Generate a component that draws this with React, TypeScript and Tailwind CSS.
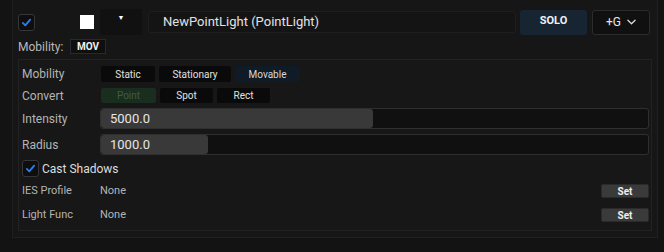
import React from 'react';

const Check = ({ className }: { className?: string }) => (
  <svg viewBox="0 0 16 16" className={className} fill="none">
    <path d="M3.5 8.5 L6.5 11.5 L12.5 4.5" stroke="#2a80e8" strokeWidth="2.2" strokeLinecap="round" strokeLinejoin="round" />
  </svg>
);

const CheckBox = () => (
  <div className="w-[17px] h-[17px] rounded-[3px] bg-[#0e0e0e] border border-[#363636] flex items-center justify-center">
    <Check className="w-[13px] h-[13px]" />
  </div>
);

const SegButton = ({
  label,
  width,
  tone = 'dark',
}: {
  label: string;
  width: string;
  tone?: 'dark' | 'blue' | 'green';
}) => {
  const toneClass =
    tone === 'blue'
      ? 'bg-[#0f1b26] text-[#d8d8d8]'
      : tone === 'green'
        ? 'bg-[#1a2e1f] text-[#3e5d45]'
        : 'bg-[#0a0a0a] text-[#e0e0e0]';
  return (
    <div className={`${width} h-full rounded-[2px] flex items-center justify-center text-[10px] ${toneClass}`}>
      {label}
    </div>
  );
};

const Slider = ({ value, fill }: { value: string; fill: string }) => (
  <div className="flex-1 h-[21px] rounded-[3px] border border-[#2f2f2f] bg-[#101010] relative overflow-hidden">
    <div className={`${fill} h-full rounded-[3px] bg-[#393939]`} />
    <span className="absolute left-[9px] top-0 h-full flex items-center text-[13px] text-[#e6e6e6]">{value}</span>
  </div>
);

const SetButton = () => (
  <div className="w-[48px] h-[14px] rounded-[2px] bg-[#3a3a3a] border border-[#2a2a2a] flex items-center justify-center text-[10px] font-bold text-[#eeeeee]">
    Set
  </div>
);

export default function App() {
  return (
    <div className="w-[664px] h-[252px] bg-[#131313] pl-[12px] font-['Roboto',sans-serif] overflow-hidden">
      <div className="w-[646px] h-[238px] bg-[#161616] border-x border-b border-[#1f1f1f] px-[5px] pt-[9px]">
        {/* header row */}
        <div className="flex items-center h-[26px]">
          <CheckBox />
          <div className="ml-[45px] w-[14px] h-[14px] bg-white" />
          <div className="ml-[6px] w-[42px] h-[26px] rounded-[3px] bg-[#111111] flex justify-center pt-[6px]">
            <span className="text-[7px] leading-none text-white">▼</span>
          </div>
          <div className="ml-[6px] w-[368px] h-[22px] rounded-[3px] bg-[#141414] border border-[#1e1e1e] flex items-center pl-[14px] text-[13px] text-[#e2e2e2]">
            NewPointLight (PointLight)
          </div>
          <div className="ml-[4px] w-[67px] h-[25px] rounded-[3px] bg-[#172533] flex justify-center pt-[3px] text-[11px] font-bold text-[#eef2f6]">
            SOLO
          </div>
          <div className="ml-[5px] w-[58px] h-[25px] rounded-[3px] bg-[#101010] border border-[#2c2c2c] flex items-center justify-center gap-[6px] text-[12px] text-[#e6e6e6]">
            <span>+G</span>
            <svg viewBox="0 0 10 6" className="w-[9px] h-[6px]" fill="none">
              <path d="M1 1 L5 5 L9 1" stroke="#dddddd" strokeWidth="1.4" strokeLinecap="round" strokeLinejoin="round" />
            </svg>
          </div>
        </div>

        {/* mobility badge */}
        <div className="flex items-center h-[15px] mt-[4px]">
          <span className="w-[52px] text-[12px] text-[#b8b8b8]">Mobility:</span>
          <div className="w-[36px] h-[15px] bg-[#0f0f0f] border border-[#232a30] flex items-center justify-center text-[10px] font-bold text-[#f0f0f0]">
            MOV
          </div>
        </div>

        {/* properties panel */}
        <div className="mt-[5px] h-[172px] bg-[#171717] border border-[#222222] pl-[3px] pr-[2px] pt-[6px]">
          <div className="flex items-center h-[16px]">
            <span className="w-[79px] text-[12px] text-[#b4b4b4]">Mobility</span>
            <div className="flex gap-[4px] h-full">
              <SegButton label="Static" width="w-[54px]" />
              <SegButton label="Stationary" width="w-[72px]" />
              <SegButton label="Movable" width="w-[65px]" tone="blue" />
            </div>
          </div>
          <div className="flex items-center h-[15px] mt-[6px]">
            <span className="w-[79px] text-[12px] text-[#b4b4b4]">Convert</span>
            <div className="flex gap-[4px] h-full">
              <SegButton label="Point" width="w-[55px]" tone="green" />
              <SegButton label="Spot" width="w-[53px]" />
              <SegButton label="Rect" width="w-[53px]" />
            </div>
          </div>
          <div className="flex items-center mt-[5px]">
            <span className="w-[78px] text-[12px] text-[#b4b4b4]">Intensity</span>
            <Slider value="5000.0" fill="w-[272px]" />
          </div>
          <div className="flex items-center mt-[5px]">
            <span className="w-[78px] text-[12px] text-[#b4b4b4]">Radius</span>
            <Slider value="1000.0" fill="w-[107px]" />
          </div>
          <div className="flex items-center gap-[3px] h-[17px] mt-[5px]">
            <CheckBox />
            <span className="text-[12px] text-[#dddddd]">Cast Shadows</span>
          </div>
          <div className="flex items-center h-[14px] mt-[7px]">
            <span className="w-[78px] text-[11px] text-[#b4b4b4]">IES Profile</span>
            <span className="flex-1 text-[11px] text-[#b4b4b4]">None</span>
            <SetButton />
          </div>
          <div className="flex items-center h-[14px] mt-[10px]">
            <span className="w-[78px] text-[11px] text-[#b4b4b4]">Light Func</span>
            <span className="flex-1 text-[11px] text-[#b4b4b4]">None</span>
            <SetButton />
          </div>
        </div>
      </div>
    </div>
  );
}
